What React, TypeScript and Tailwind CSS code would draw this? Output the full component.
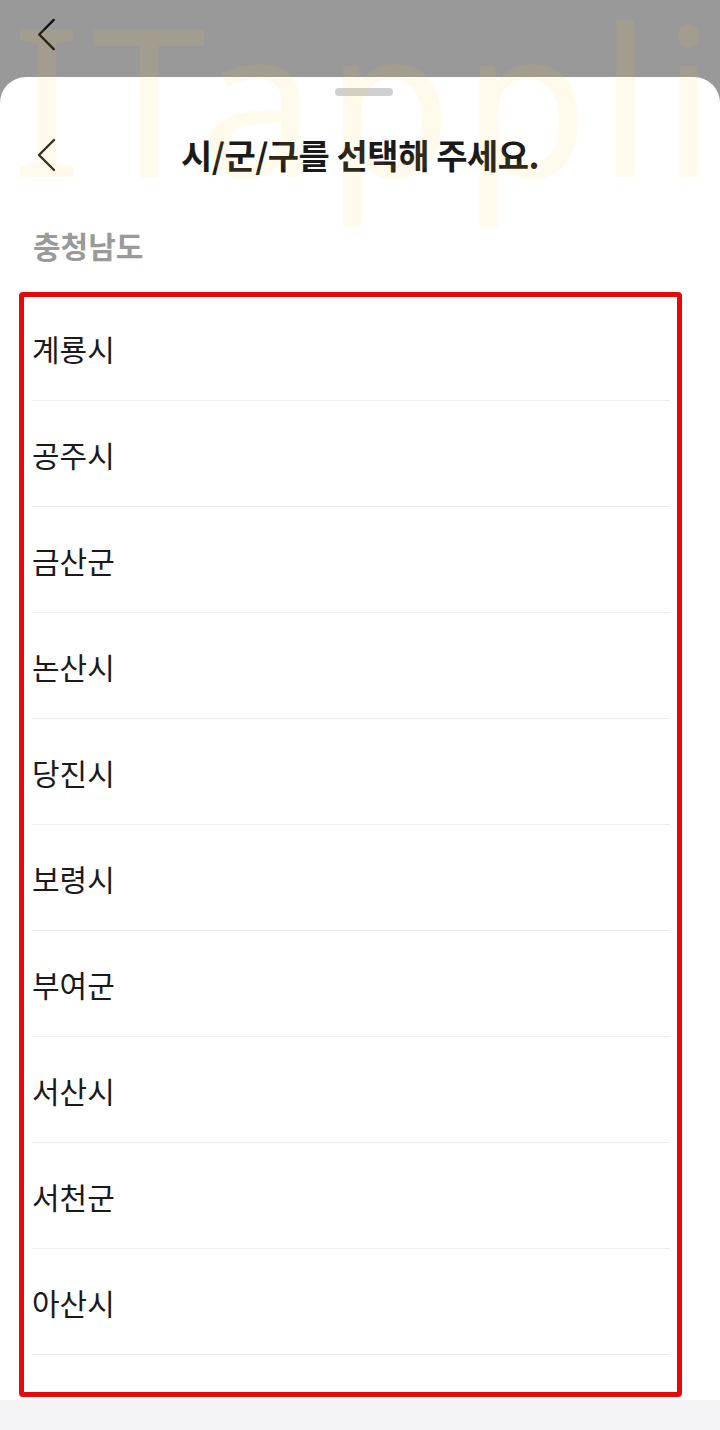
import React from 'react';

const cities = ['계룡시', '공주시', '금산군', '논산시', '당진시', '보령시', '부여군', '서산시', '서천군', '아산시'];

const Chevron = ({ className = '' }: { className?: string }) => (
  <svg viewBox="0 0 20 34" className={className} fill="none" stroke="currentColor" strokeWidth="2.4" strokeLinecap="round" strokeLinejoin="round">
    <path d="M18 2 L3 17 L18 32" />
  </svg>
);

export default function App() {
  return (
    <div className="relative w-[720px] h-[1430px] overflow-hidden bg-[#999999] font-['Noto_Sans_CJK_KR','Noto_Sans',sans-serif]">
      {/* dimmed page behind the sheet */}
      <div className="h-[77px] pl-[36px] pt-[18px]">
        <Chevron className="w-[20px] h-[33px] text-[#111]" />
      </div>

      {/* bottom sheet */}
      <div className="bg-white rounded-t-[26px] h-[1353px] flex flex-col">
        <div className="flex justify-center pt-[11px] h-[19px]">
          <div className="w-[58px] h-[8px] rounded-full bg-[#d0d0d0] ml-[8px]" />
        </div>

        <div className="relative h-[118px] flex items-center justify-center">
          <Chevron className="absolute left-[36px] top-[42px] w-[20px] h-[34px] text-[#222]" />
          <h1 className="text-[34px] font-bold text-[#1a1a1a] tracking-[-0.5px] leading-none">시/군/구를 선택해 주세요.</h1>
        </div>

        <div className="px-[33px] h-[62px] flex items-center">
          <span className="text-[30px] font-bold text-[#9a9a9a] leading-none">충청남도</span>
        </div>

        <div className="relative mt-[19px] h-[1105px]">
          <ul className="pl-[32px] pr-[50px]">
            {cities.map((c) => (
              <li key={c} className="h-[106px] border-b border-[#ececec] flex items-center">
                <span className="text-[30px] text-[#1a1a1a] leading-none">{c}</span>
              </li>
            ))}
          </ul>
          {/* highlight annotation */}
          <div className="absolute left-[19px] top-[-3px] w-[663px] h-[1105px] border-[5px] border-[#e8070b] rounded-[4px] pointer-events-none" />
        </div>

        <div className="flex-1 bg-[#f4f4f6]" />
      </div>

      {/* watermark */}
      <div className="absolute left-[12px] top-[-6px] text-[206px] font-normal leading-none tracking-[10px] text-[rgba(255,205,40,0.09)] font-['Noto_Sans',sans-serif] pointer-events-none select-none">
        ITappli
      </div>
    </div>
  );
}
